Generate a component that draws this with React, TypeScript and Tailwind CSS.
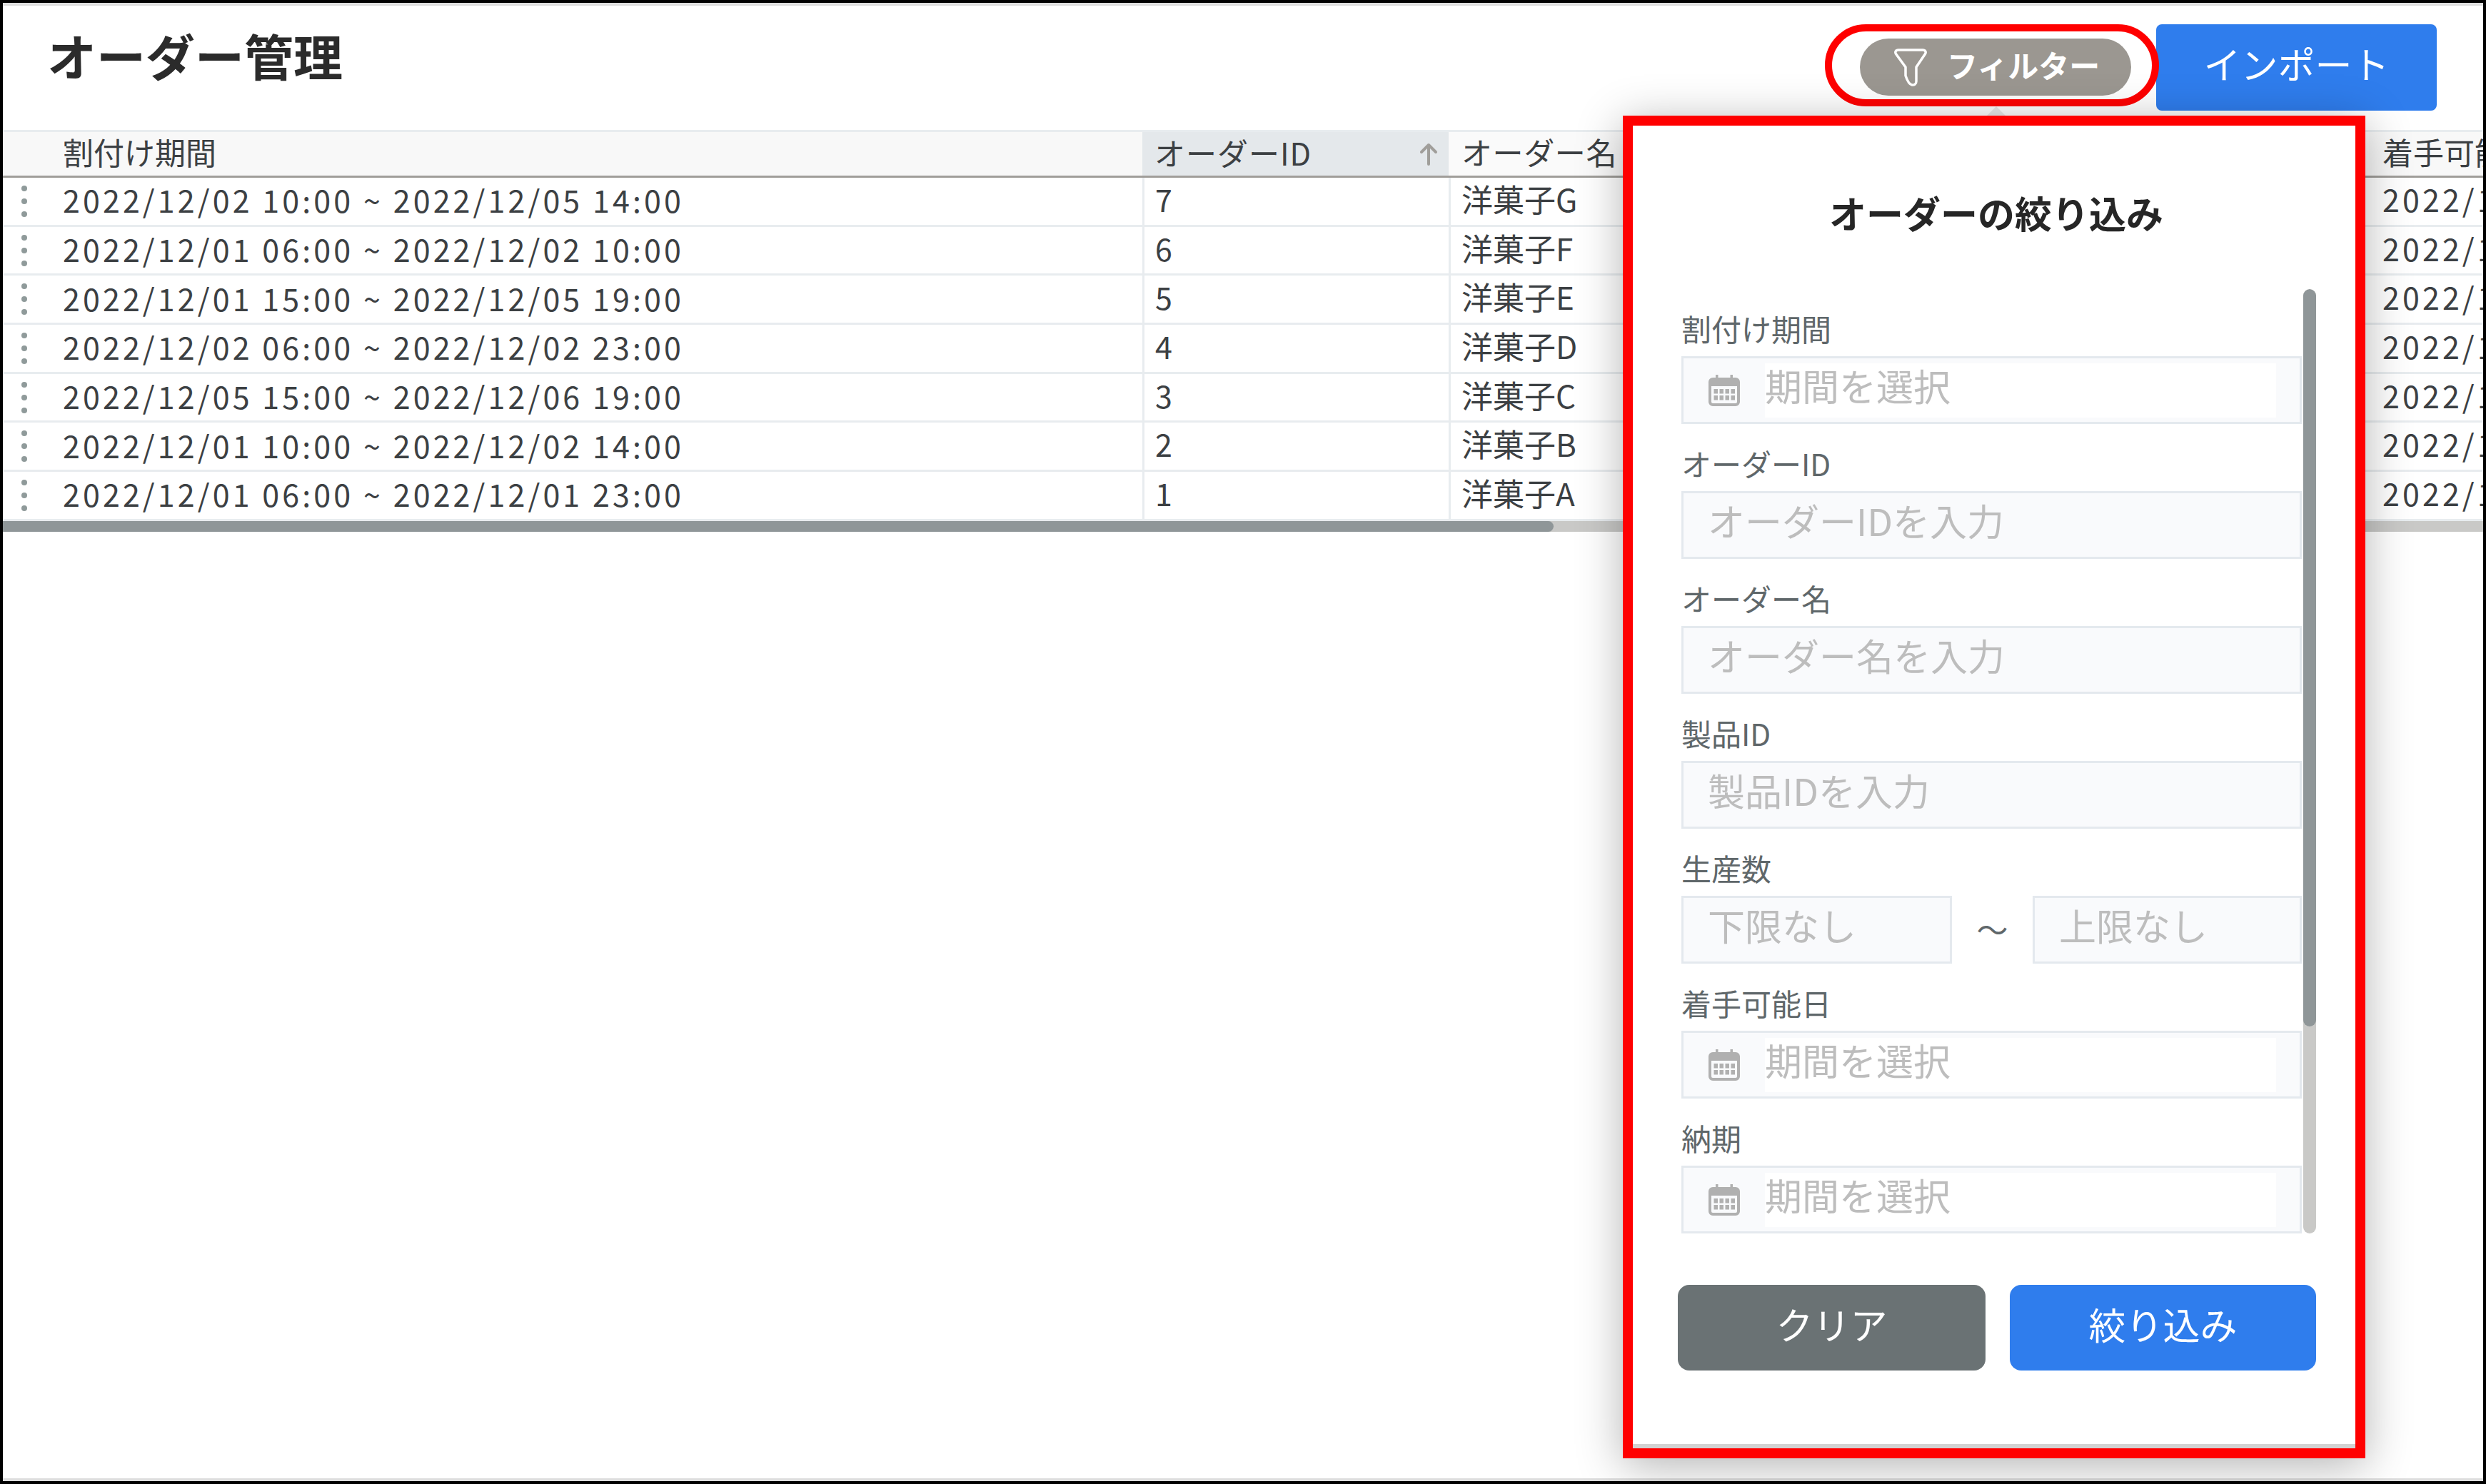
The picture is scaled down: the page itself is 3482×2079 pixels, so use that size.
const rows = [
  ["2022/12/02 10:00 ~ 2022/12/05 14:00", "7", "洋菓子G"],
  ["2022/12/01 06:00 ~ 2022/12/02 10:00", "6", "洋菓子F"],
  ["2022/12/01 15:00 ~ 2022/12/05 19:00", "5", "洋菓子E"],
  ["2022/12/02 06:00 ~ 2022/12/02 23:00", "4", "洋菓子D"],
  ["2022/12/05 15:00 ~ 2022/12/06 19:00", "3", "洋菓子C"],
  ["2022/12/01 10:00 ~ 2022/12/02 14:00", "2", "洋菓子B"],
  ["2022/12/01 06:00 ~ 2022/12/01 23:00", "1", "洋菓子A"],
];

const FunnelIcon = () => (
  <svg width="46" height="53" viewBox="0 0 46 53" fill="none" stroke="white" strokeWidth="3.5" strokeLinejoin="round">
    <path d="M6 2H40C44 2 45 5 43.5 7.5L31 26V46C31 50 28 51.5 25 51C21.5 50.5 18 44 16 38V26L2.5 7.5C1 5 2 2 6 2Z" />
  </svg>
);

const SortArrow = () => (
  <svg width="26" height="32" viewBox="0 0 26 32" fill="none" stroke="#a09e9a" strokeWidth="4" strokeLinecap="round" strokeLinejoin="round">
    <path d="M13 30V3M3 13L13 3L23 13" />
  </svg>
);

const CalendarIcon = () => (
  <svg width="44" height="45" viewBox="0 0 44 45" className="shrink-0">
    <rect x="2" y="7" width="40" height="36" rx="4" fill="none" stroke="#b0b0b0" strokeWidth="4" />
    <rect x="2" y="7" width="40" height="10" fill="#b0b0b0" />
    <rect x="10" y="1" width="3.5" height="8" fill="#b0b0b0" />
    <rect x="30.5" y="1" width="3.5" height="8" fill="#b0b0b0" />
    {[7.5, 15.5, 23.5, 31.5].map((x) =>
      [21, 30].map((y) => <rect key={`${x}-${y}`} x={x} y={y} width="5.5" height="6.5" fill="#b0b0b0" />),
    )}
  </svg>
);

const RowHandle = () => (
  <div className="flex w-[84px] shrink-0 flex-col items-start gap-[10px] pl-[26px]">
    <span className="h-[8px] w-[8px] rounded-full bg-[#8f9a9a]" />
    <span className="h-[8px] w-[8px] rounded-full bg-[#8f9a9a]" />
    <span className="h-[8px] w-[8px] rounded-full bg-[#8f9a9a]" />
  </div>
);

const Label = ({ text }: { text: string }) => (
  <p className="mb-[5px] h-[64px] pb-[4px] text-[42px] leading-[60px] text-[#5f676a]">{text}</p>
);

const DateField = () => (
  <div className="flex h-[95px] items-center border-[3px] border-[#e4e9ee] bg-[#f9fafc] pr-[33px]">
    <div className="flex w-[114px] shrink-0 justify-center">
      <CalendarIcon />
    </div>
    <div className="flex h-[76px] flex-1 items-center bg-white pb-[13px] text-[52px] leading-none text-[#bdbdbd]">期間を選択</div>
  </div>
);

const TextField = ({ placeholder, className = "" }: { placeholder: string; className?: string }) => (
  <div className={`flex h-[95px] items-center border-[3px] border-[#e4e9ee] bg-[#f9fafc] pb-[13px] pl-[34px] text-[52px] leading-none text-[#bdbdbd] ${className}`}>
    {placeholder}
  </div>
);

const FilterPanel = () => (
  <div className="absolute top-[158px] left-[2269px] z-20 flex h-[1881px] w-[1040px] flex-col border-[14px] border-[#ff0000] bg-white shadow-[0_10px_60px_rgba(0,0,0,0.3)]">
    <div className="h-[229px] pt-[90px] pl-[6px] text-center text-[52px] leading-[64px] font-bold text-[#262626]">オーダーの絞り込み</div>
    <div className="flex pl-[68px]">
      <div className="flex w-[869px] flex-col gap-[25px] pt-[25px]">
        <div>
          <Label text="割付け期間" />
          <DateField />
        </div>
        <div>
          <Label text="オーダーID" />
          <TextField placeholder="オーダーIDを入力" />
        </div>
        <div>
          <Label text="オーダー名" />
          <TextField placeholder="オーダー名を入力" />
        </div>
        <div>
          <Label text="製品ID" />
          <TextField placeholder="製品IDを入力" />
        </div>
        <div>
          <Label text="生産数" />
          <div className="flex items-center">
            <TextField placeholder="下限なし" className="w-[379px]" />
            <span className="flex-1 pb-[4px] text-center text-[44px] leading-none text-[#5f676a]">～</span>
            <TextField placeholder="上限なし" className="w-[377px]" />
          </div>
        </div>
        <div>
          <Label text="着手可能日" />
          <DateField />
        </div>
        <div>
          <Label text="納期" />
          <DateField />
        </div>
      </div>
      <div className="ml-[2px] w-[18px] overflow-hidden rounded-full bg-[#c9c9c7]">
        <div className="h-[1033px] rounded-full bg-[#8f9698]" />
      </div>
    </div>
    <div className="mt-[72px] flex gap-[34px] pl-[63px]">
      <button className="h-[120px] w-[431px] rounded-[16px] bg-[#6a7274] pb-[10px] text-[52px] text-white">クリア</button>
      <button className="h-[120px] w-[429px] rounded-[16px] bg-[#2f7ded] pb-[10px] text-[52px] text-white">絞り込み</button>
    </div>
    <div className="mt-auto h-[6px] bg-[#d2d2d2]" />
  </div>
);

export default function App() {
  return (
    <div className="relative h-[2079px] w-[3482px] overflow-hidden border-4 border-black bg-white font-['Noto_Sans_CJK_JP','Liberation_Sans',sans-serif]">
      <div className="flex h-full flex-col border-y-4 border-[#dedede]">
        <div className="flex h-[174px] shrink-0 items-center justify-between pr-[65px] pl-[62px]">
          <h1 className="pb-[36px] text-[69px] leading-none font-bold text-[#2b2b2b]">オーダー管理</h1>
          <div className="flex items-center gap-[35px] pb-[2px]">
            <div className="relative">
              <button className="flex h-[80px] w-[380px] items-center rounded-full bg-[#9b9791] pl-[48px] text-[43px] font-bold text-white">
                <FunnelIcon />
                <span className="ml-[28px] pb-[7px]">フィルター</span>
              </button>
              <div className="absolute -top-[20px] -right-[39px] -bottom-[15px] -left-[49px] rounded-full border-[10px] border-[#ff0000]" />
              <div className="absolute -bottom-[28px] left-[178px] h-0 w-0 border-x-[13px] border-b-[13px] border-x-transparent border-b-[#e9e9e9]" />
            </div>
            <button className="h-[121px] w-[393px] rounded-[8px] bg-[#2f7ded] pb-[10px] text-[52px] text-white">インポート</button>
          </div>
        </div>

        <div className="text-[43px] text-[#3c4043]">
          <div className="grid h-[67px] grid-cols-[1596px_429px_1289px_1fr] border-y-[3px] border-t-[#e8ecef] border-b-[#a09e9a] text-[43px] leading-[54px]">
            <div className="bg-[#f8f8f8] pl-[84px]">割付け期間</div>
            <div className="flex items-center justify-between bg-[#e4e8eb] pr-[15px] pl-[17px]">
              <span className="pb-[5px] tracking-[1px]">オーダーID</span>
              <SortArrow />
            </div>
            <div className="bg-[#fafafa] pl-[18px] tracking-[0.6px]">オーダー名</div>
            <div className="overflow-hidden bg-[#f8f8f8] pl-[19px] whitespace-nowrap">着手可能日</div>
          </div>
          {rows.map((row) => (
            <div key={row[1]} className="grid h-[68.7px] grid-cols-[1596px_429px_1289px_1fr] border-b-[3px] border-[#e8ecef] leading-[58px]">
              <div className="flex items-center tracking-[4.1px]">
                <RowHandle />
                <span className="pb-[5px]">{row[0]}</span>
              </div>
              <div className="border-l-[3px] border-[#e8ecef] pl-[15px]">{row[1]}</div>
              <div className="border-l-[3px] border-[#e8ecef] pl-[15px] text-[44px]">{row[2]}</div>
              <div className="overflow-hidden pl-[19px] tracking-[4.1px] whitespace-nowrap">2022/12/02</div>
            </div>
          ))}
          <div className="h-[15px] bg-[#c9c9c7]">
            <div className="h-full w-[2172px] rounded-r-full bg-[#8f9698]" />
          </div>
        </div>
      </div>
      <FilterPanel />
    </div>
  );
}
